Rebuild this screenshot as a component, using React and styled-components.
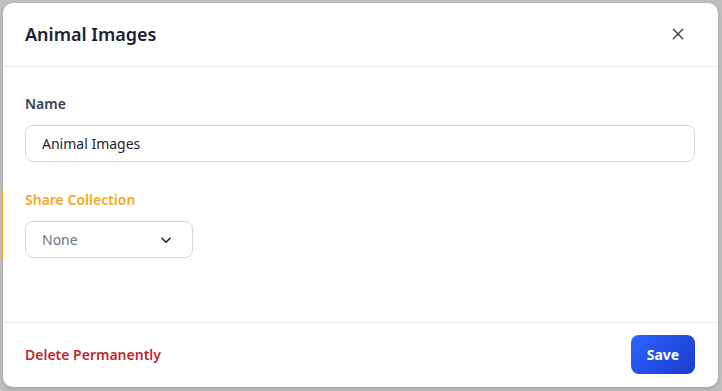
import React from 'react';
import styled, {createGlobalStyle} from "styled-components";

const GlobalStyle = createGlobalStyle`
  html, body {
    margin: 0;
    padding: 0;
    background: #bfbfbf;
    font-family: "Noto Sans", "Open Sans", sans-serif;
  }
`;

const CloseIcon = () => (
  <svg width="16" height="16" viewBox="0 0 24 24" fill="none" stroke="#3b4658" strokeWidth="2.2" strokeLinecap="round">
    <path d="M5 5L19 19M19 5L5 19"/>
  </svg>
);

const ChevronIcon = () => (
  <svg width="14" height="14" viewBox="0 0 24 24" fill="none" stroke="#111827" strokeWidth="2.4" strokeLinecap="round" strokeLinejoin="round">
    <path d="M5 9l7 7 7-7"/>
  </svg>
);

const App = () => {
  return (
    <Page>
      <GlobalStyle/>
      <EdgeMark/>
      <Modal>
        <Header>
          <Title>Animal Images</Title>
          <CloseButton><CloseIcon/></CloseButton>
        </Header>
        <Body>
          <Field>
            <Label>Name</Label>
            <Input defaultValue="Animal Images"/>
          </Field>
          <Field>
            <Label $accent>Share Collection</Label>
            <Select>
              <span>None</span>
              <ChevronIcon/>
            </Select>
          </Field>
        </Body>
        <Footer>
          <DeleteButton>Delete Permanently</DeleteButton>
          <SaveButton>Save</SaveButton>
        </Footer>
      </Modal>
    </Page>
  );
};

const Page = styled.div`
  position: relative;
  width: 722px;
  height: 391px;
  padding: 3px 4px 4px 3px;
  box-sizing: border-box;
  background: #bfbfbf;
`;

const EdgeMark = styled.div`
  position: absolute;
  left: 2px;
  top: 190px;
  width: 1px;
  height: 69px;
  background: #f0b030;
`;

const Modal = styled.div`
  width: 100%;
  height: 100%;
  background: #fff;
  border-radius: 10px;
  display: flex;
  flex-direction: column;
  box-shadow: 0 2px 4px rgba(0, 0, 0, 0.15);
  overflow: hidden;
`;

const Header = styled.div`
  height: 64px;
  display: flex;
  align-items: center;
  justify-content: space-between;
  padding: 0 32px 1px 22px;
  border-bottom: 1px solid #e8e8ea;
  box-sizing: border-box;
`;

const Title = styled.h2`
  margin: 0;
  font-size: 18px;
  font-weight: 600;
  color: #1b2132;
`;

const CloseButton = styled.button`
  border: none;
  background: none;
  padding: 0;
  display: flex;
  cursor: pointer;
`;

const Body = styled.div`
  flex: 1;
  padding: 27px 23px 0 22px;
  display: flex;
  flex-direction: column;
  gap: 28px;
`;

const Field = styled.div`
  display: flex;
  flex-direction: column;
  gap: 11px;
`;

const Label = styled.label`
  font-size: 14px;
  line-height: 20px;
  font-weight: 600;
  color: ${p => p.$accent ? "#f5a623" : "#384152"};
`;

const Input = styled.input`
  height: 37px;
  box-sizing: border-box;
  border: 1px solid #d3d5dc;
  border-radius: 8px;
  padding: 0 16px;
  font-family: inherit;
  font-size: 14px;
  color: #1f2430;
  outline: none;
`;

const Select = styled.div`
  width: 168px;
  height: 37px;
  box-sizing: border-box;
  border: 1px solid #d3d5dc;
  border-radius: 8px;
  padding: 0 19px 0 16px;
  display: flex;
  align-items: center;
  justify-content: space-between;
  font-size: 14px;
  color: #6b7282;
`;

const Footer = styled.div`
  height: 65px;
  box-sizing: border-box;
  border-top: 1px solid #e8e8ea;
  display: flex;
  align-items: center;
  justify-content: space-between;
  padding: 0 23px 2px 22px;
`;

const DeleteButton = styled.button`
  border: none;
  background: none;
  padding: 0;
  font-family: inherit;
  font-size: 14px;
  font-weight: 600;
  color: #c0282d;
  cursor: pointer;
`;

const SaveButton = styled.button`
  width: 64px;
  height: 39px;
  border: none;
  border-radius: 8px;
  background: linear-gradient(135deg, #2d63ff 0%, #1a3ccc 100%);
  color: #fff;
  font-family: inherit;
  font-size: 14px;
  font-weight: 700;
  cursor: pointer;
`;

export default App;
